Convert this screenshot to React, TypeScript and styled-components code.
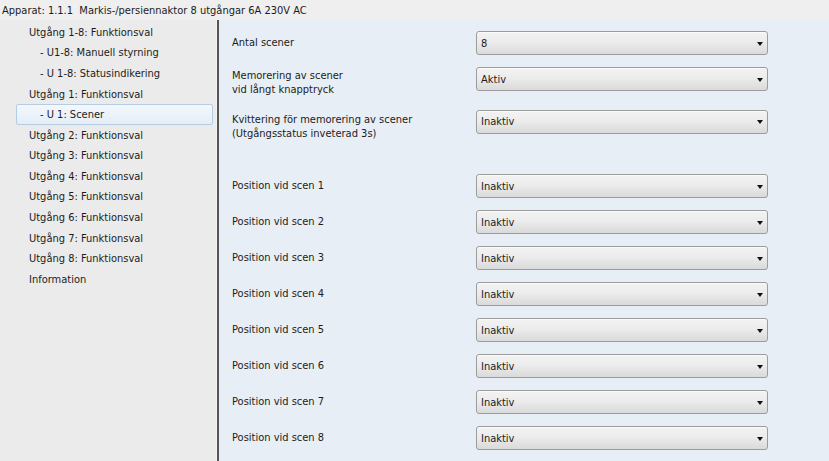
import React from "react";
import styled, { createGlobalStyle } from "styled-components";

const Global = createGlobalStyle`
  html, body { margin: 0; padding: 0; }
  body {
    width: 829px; height: 461px; overflow: hidden;
    font-family: "DejaVu Sans Condensed", "DejaVu Sans", sans-serif;
    font-size: 11px; color: #1c1c1c;
  }
`;

const Page = styled.div`
  width: 829px; height: 461px;
  display: flex; flex-direction: column;
  background: #ececec;
`;

const Header = styled.div`
  height: 20px; flex: none;
  display: flex; align-items: center;
  padding-left: 2px;
  background: #efefef;
  white-space: pre;
`;

const Body = styled.div`
  flex: 1; display: flex; min-height: 0;
`;

const Sidebar = styled.div`
  width: 216px; flex: none;
  background: #ebebeb;
  padding-top: 2px;
  display: flex; flex-direction: column;
`;

const TreeItem = styled.div<{ $level: number; $selected?: boolean }>`
  height: 20.58px; box-sizing: border-box;
  display: flex; align-items: center;
  margin: 0 3px 0 16px;
  padding-left: ${(p) => (p.$level === 0 ? 12 : 23)}px;
  border: 1px solid ${(p) => (p.$selected ? "#b4cce6" : "transparent")};
  border-radius: 2px;
  background: ${(p) => (p.$selected ? "linear-gradient(#f4f8fc, #e4edf6)" : "transparent")};
  white-space: nowrap;
`;

const Divider = styled.div`
  width: 3px; flex: none;
  background: linear-gradient(to right, #f4f4f4 0 1px, #555 1px 3px);
`;

const Content = styled.div`
  flex: 1;
  background: #e7eef5;
  padding: 5px 0 0 13px;
  display: flex; flex-direction: column;
`;

const Row = styled.div<{ $gap?: number; $labelShift?: number }>`
  height: 36px;
  margin-top: ${(p) => p.$gap ?? 0}px;
  display: grid;
  grid-template-columns: 244px 292px;
  align-items: center;
  & > span:first-child {
    padding-top: ${(p) => p.$labelShift ?? 0}px;
    line-height: 14px;
  }
`;

const Label = styled.span``;

const Select = styled.div`
  height: 24px; box-sizing: border-box;
  border: 1px solid #9c9c9c;
  border-radius: 3px;
  background: linear-gradient(#f3f3f3, #ececec 45%, #dadada);
  box-shadow: inset 0 1px 0 #fbfbfb;
  display: flex; align-items: center; justify-content: space-between;
  padding: 0 4px 0 4px;
`;

const Arrow = styled.span`
  width: 0; height: 0;
  border-left: 3.5px solid transparent;
  border-right: 3.5px solid transparent;
  border-top: 4px solid #111;
  margin-top: 1px;
`;

const tree: { text: string; level: number; selected?: boolean }[] = [
  { text: "Utgång 1-8: Funktionsval", level: 0 },
  { text: "- U1-8: Manuell styrning", level: 1 },
  { text: "- U 1-8: Statusindikering", level: 1 },
  { text: "Utgång 1: Funktionsval", level: 0 },
  { text: "- U 1: Scener", level: 1, selected: true },
  ...[2, 3, 4, 5, 6, 7, 8].map((n) => ({ text: `Utgång ${n}: Funktionsval`, level: 0 })),
  { text: "Information", level: 0 },
];

const Dropdown = ({ value }: { value: string }) => (
  <Select>
    <span>{value}</span>
    <Arrow />
  </Select>
);

export default function App() {
  return (
    <Page>
      <Global />
      <Header>Apparat: 1.1.1  Markis-/persiennaktor 8 utgångar 6A 230V AC</Header>
      <Body>
        <Sidebar>
          {tree.map((t, i) => (
            <TreeItem key={i} $level={t.level} $selected={t.selected}>
              {t.text}
            </TreeItem>
          ))}
        </Sidebar>
        <Divider />
        <Content>
          <Row>
            <Label>Antal scener</Label>
            <Dropdown value="8" />
          </Row>
          <Row $labelShift={7}>
            <Label>
              Memorering av scener
              <br />
              vid långt knapptryck
            </Label>
            <Dropdown value="Aktiv" />
          </Row>
          <Row $gap={5} $labelShift={11}>
            <Label>
              Kvittering för memorering av scener
              <br />
              (Utgångsstatus inveterad 3s)
            </Label>
            <Dropdown value="Inaktiv" />
          </Row>
          {[1, 2, 3, 4, 5, 6, 7, 8].map((n) => (
            <Row key={n} $gap={n === 1 ? 30 : 0} $labelShift={-2}>
              <Label>Position vid scen {n}</Label>
              <Dropdown value="Inaktiv" />
            </Row>
          ))}
        </Content>
      </Body>
    </Page>
  );
}
